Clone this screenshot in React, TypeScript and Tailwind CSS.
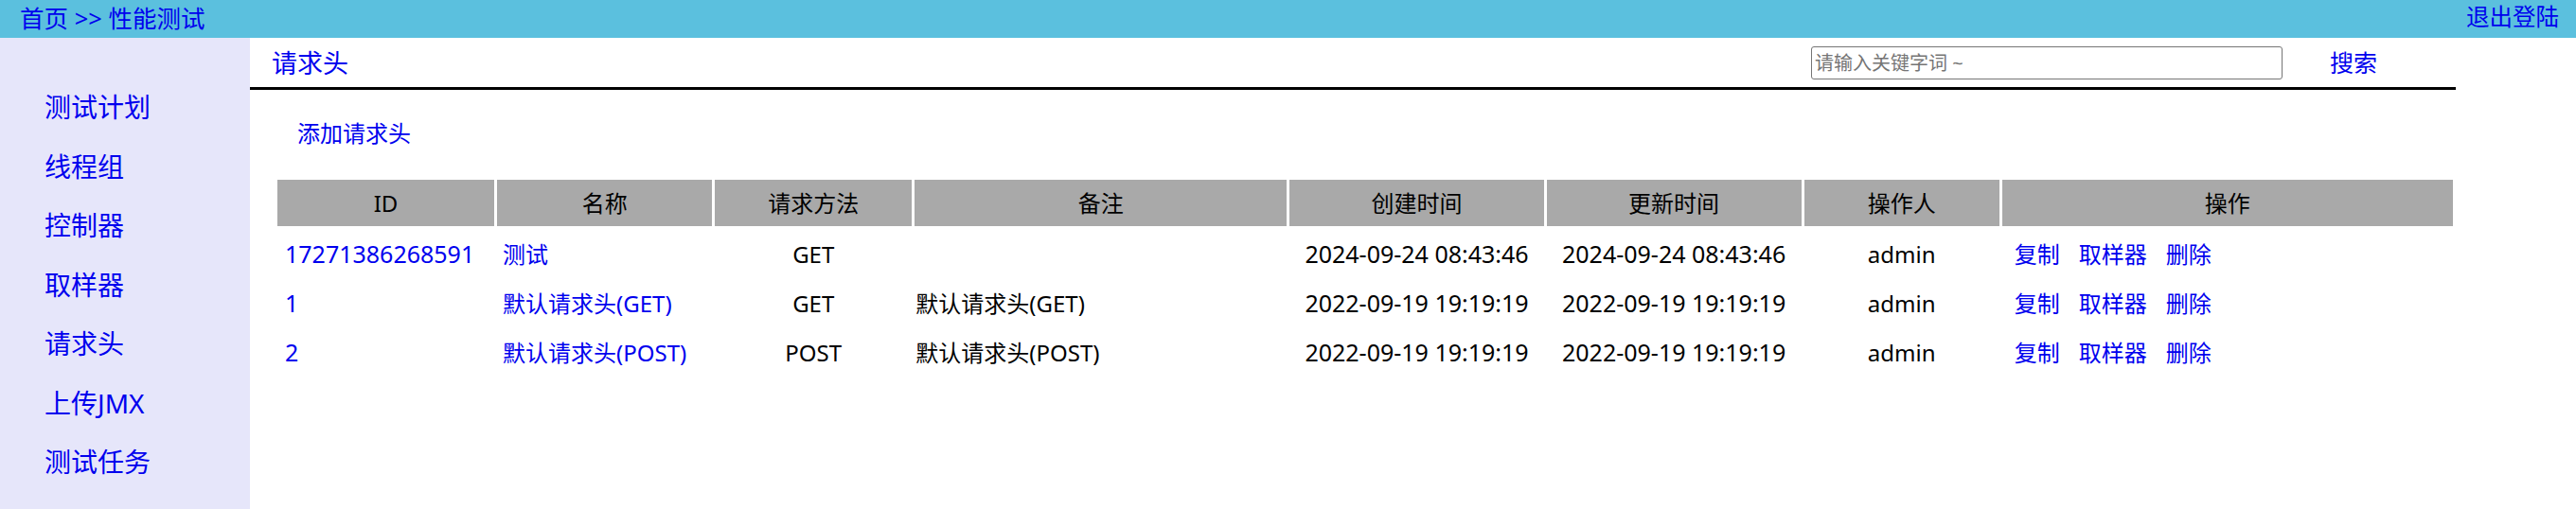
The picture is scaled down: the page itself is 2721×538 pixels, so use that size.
import { useState } from 'react';

interface HeaderRow {
  id: string;
  name: string;
  method: string;
  remark: string;
  created: string;
  updated: string;
  operator: string;
}

const rows: HeaderRow[] = [
  {
    id: '17271386268591',
    name: '测试',
    method: 'GET',
    remark: '',
    created: '2024-09-24 08:43:46',
    updated: '2024-09-24 08:43:46',
    operator: 'admin',
  },
  {
    id: '1',
    name: '默认请求头(GET)',
    method: 'GET',
    remark: '默认请求头(GET)',
    created: '2022-09-19 19:19:19',
    updated: '2022-09-19 19:19:19',
    operator: 'admin',
  },
  {
    id: '2',
    name: '默认请求头(POST)',
    method: 'POST',
    remark: '默认请求头(POST)',
    created: '2022-09-19 19:19:19',
    updated: '2022-09-19 19:19:19',
    operator: 'admin',
  },
];

const menu = ['测试计划', '线程组', '控制器', '取样器', '请求头', '上传JMX', '测试任务'];

export default function App() {
  const [keyword, setKeyword] = useState('');

  return (
    <div className="w-[2721px] h-[538px] flex flex-col bg-white font-['Noto_Sans','Noto_Sans_CJK_SC',sans-serif] text-black overflow-hidden">
      {/* top bar */}
      <div className="h-[40px] flex items-center justify-between bg-[#5bc0de] pl-[21px] pr-[18px] leading-none text-[#0000ee]">
        <div className="text-[25.5px]">
          <a href="#">首页</a>
          <span> &gt;&gt; </span>
          <a href="#">性能测试</a>
        </div>
        <a href="#" className="-mt-[4px] text-[24.5px]">退出登陆</a>
      </div>

      <div className="flex flex-1">
        {/* sidebar */}
        <div className="w-[264px] bg-[#e6e6fa] pt-[42px] pl-[47px]">
          {menu.map(item => (
            <div key={item} className="h-[62.5px] flex items-center text-[28px] leading-none text-[#0000ee]">
              <a href="#">{item}</a>
            </div>
          ))}
        </div>

        {/* content */}
        <div className="w-[2330px] flex flex-col">
          <div className="h-[55px] flex items-center border-b-[3px] border-black pl-[23px] pr-[83px]">
            <span className="text-[27px] leading-none text-[#0000ee]">请求头</span>
            <input
              className="ml-auto w-[498px] h-[35px] border border-[#767676] rounded-[3px] px-[3px] text-[20px] placeholder:text-[#757575] outline-none"
              placeholder="请输入关键字词 ~"
              value={keyword}
              onChange={e => setKeyword(e.target.value)}
            />
            <a href="#" className="ml-[50px] text-[25px] leading-none text-[#0000ee]">搜索</a>
          </div>

          <div className="h-[92px] flex items-center pl-[50px]">
            <a href="#" className="text-[24px] leading-none text-[#0000ee]">添加请求头</a>
          </div>

          <table className="ml-[26px] w-[2304px] table-fixed border-separate border-spacing-[3px] text-[24px]">
            <thead>
              <tr className="bg-[#a9a9a9] h-[49px]">
                <th className="w-[229px] font-normal">ID</th>
                <th className="w-[227px] font-normal">名称</th>
                <th className="w-[208px] font-normal">请求方法</th>
                <th className="w-[393px] font-normal">备注</th>
                <th className="w-[268px] font-normal">创建时间</th>
                <th className="w-[269px] font-normal">更新时间</th>
                <th className="w-[206px] font-normal">操作人</th>
                <th className="w-[476px] font-normal">操作</th>
              </tr>
            </thead>
            <tbody>
              {rows.map(row => (
                <tr key={row.id} className="h-[49px]">
                  <td className="pl-[8px] pt-[4px] text-[25px] text-[#0000ee]">
                    <a href="#">{row.id}</a>
                  </td>
                  <td className="pl-[6px] pt-[4px] text-[#0000ee]">
                    <a href="#">{row.name}</a>
                  </td>
                  <td className="text-center pt-[4px]">{row.method}</td>
                  <td className="pl-[1px] pt-[4px]">{row.remark}</td>
                  <td className="text-center pt-[4px] text-[25px]">{row.created}</td>
                  <td className="text-center pt-[4px] text-[25px]">{row.updated}</td>
                  <td className="text-center pt-[4px]">{row.operator}</td>
                  <td className="pl-[13px] pt-[4px] text-[#0000ee]">
                    <a href="#" className="mr-[20px]">复制</a>
                    <a href="#" className="mr-[20px]">取样器</a>
                    <a href="#">删除</a>
                  </td>
                </tr>
              ))}
            </tbody>
          </table>
        </div>
      </div>
    </div>
  );
}
